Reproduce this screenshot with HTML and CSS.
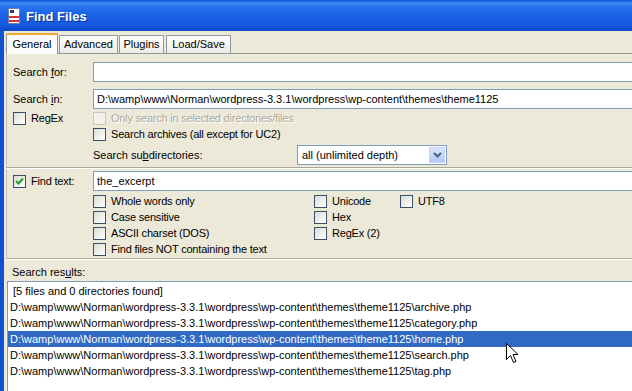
FILE: index.html
```html
<!DOCTYPE html>
<html>
<head>
<title>Find Files</title>
<link rel="stylesheet" href="styles.css">
</head>
<body>
<div class="window">
	<div class="titlebar">
		<svg class="appicon" width="12" height="16" viewBox="0 0 12 16">
			<rect x="0.5" y="0.5" width="11" height="15" fill="#fff" stroke="#6a7fa8"/>
			<rect x="2" y="2" width="4" height="3" fill="#2a3f7a"/>
			<rect x="1" y="8" width="10" height="2" fill="#d8343a"/>
			<rect x="1" y="12" width="10" height="2" fill="#d8343a"/>
		</svg>
		<span class="title">Find Files</span>
	</div>
	<div class="frame">
		<div class="tabs">
			<div class="tab active">General</div>
			<div class="tab adv">Advanced</div>
			<div class="tab plug">Plugins</div>
			<div class="tab load">Load/Save</div>
		</div>
		<div class="panel">
			<div class="row field">
				<span class="label">Search <u>f</u>or:</span>
				<div class="edit"></div>
			</div>
			<div class="row field">
				<span class="label">Search <u>i</u>n:</span>
				<div class="edit">D:\wamp\www\Norman\wordpress-3.3.1\wordpress\wp-content\themes\theme1125</div>
			</div>
			<div class="row check">
				<span class="cb"><i class="box"></i>RegEx</span>
				<span class="cb disabled"><i class="box"></i>Only search in selected directories/files</span>
			</div>
			<div class="row check">
				<span></span>
				<span class="cb"><i class="box"></i>Search archives (all except for UC2)</span>
			</div>
			<div class="row field">
				<span></span>
				<div class="subdirs">
					<span class="sublabel">Search su<u>b</u>directories:</span>
					<div class="select">
						<span>all (unlimited depth)</span>
						<span class="dropbtn">
							<svg width="9" height="6" viewBox="0 0 9 6"><path d="M1 1 L4.5 4.5 L8 1" fill="none" stroke="#4d6185" stroke-width="2"/></svg>
						</span>
					</div>
				</div>
			</div>
		</div>
		<div class="findgroup">
			<div class="row field">
				<span class="cb"><i class="box checked"><svg width="9" height="9" viewBox="0 0 9 9"><path d="M1 4 L3.5 6.5 L8 1.5" fill="none" stroke="#21a121" stroke-width="2"/></svg></i>Find text:</span>
				<div class="edit">the_excerpt</div>
			</div>
			<div class="row">
				<span></span>
				<div class="options">
					<span class="cb"><i class="box"></i>Whole words only</span>
					<span class="cb"><i class="box"></i>Unicode</span>
					<span class="cb"><i class="box"></i>UTF8</span>
					<span class="cb"><i class="box"></i>Case sensitive</span>
					<span class="cb"><i class="box"></i>Hex</span>
					<span></span>
					<span class="cb"><i class="box"></i>ASCII charset (DOS)</span>
					<span class="cb"><i class="box"></i>RegEx (2)</span>
					<span></span>
					<span class="cb"><i class="box"></i>Find files NOT containing the text</span>
				</div>
			</div>
		</div>
		<div class="results-label">Search res<u>u</u>lts:</div>
		<div class="results">
			<div class="item">&nbsp;[5 files and 0 directories found]</div>
			<div class="item">D:\wamp\www\Norman\wordpress-3.3.1\wordpress\wp-content\themes\theme1125\archive.php</div>
			<div class="item">D:\wamp\www\Norman\wordpress-3.3.1\wordpress\wp-content\themes\theme1125\category.php</div>
			<div class="item selected">D:\wamp\www\Norman\wordpress-3.3.1\wordpress\wp-content\themes\theme1125\home.php</div>
			<div class="item">D:\wamp\www\Norman\wordpress-3.3.1\wordpress\wp-content\themes\theme1125\search.php</div>
			<div class="item">D:\wamp\www\Norman\wordpress-3.3.1\wordpress\wp-content\themes\theme1125\tag.php</div>
		</div>
	</div>
	<svg class="cursor" width="13" height="21" viewBox="0 0 13 21">
		<path d="M0.5 0.5 L0.5 16.5 L4.5 12.5 L7.5 19.5 L10 18.5 L7 11.5 L12 11.5 Z" fill="#fff" stroke="#000" stroke-width="1"/>
	</svg>
</div>
</body>
</html>
```

FILE: styles.css
```css
body
{
	margin: 0;
	overflow: hidden;
	background: #ece9d8;
	font-family: "Liberation Sans", Arial, sans-serif;
	font-size: 11px;
	color: #000;
}
.window
{
	position: relative;
	width: 660px;
	height: 391px;
	overflow: hidden;
	background: #ece9d8;
}
.titlebar
{
	height: 31px;
	display: flex;
	align-items: center;
	padding-left: 8px;
	background: linear-gradient(#0a4fd6 0px, #3d8df8 3px, #2b74ee 6px, #1c64e6 14px, #1559de 25px, #0c47c6 31px);
}
.appicon
{
	margin-right: 6px;
	margin-top: 1px;
}
.title
{
	color: #fff;
	font-weight: bold;
	font-size: 13px;
	text-shadow: 1px 1px 0 #0a2f8c;
	margin-top: 1px;
}
.frame
{
	border-left: 4px solid #1252d2;
	height: 360px;
	padding-left: 2px;
}
.tabs
{
	height: 22px;
	display: flex;
	align-items: flex-end;
	border-bottom: 1px solid #919b9c;
}
.tab
{
	height: 17px;
	line-height: 17px;
	text-align: center;
	border: 1px solid #919b9c;
	border-bottom: none;
	background: linear-gradient(#ffffff, #ecebe5);
	margin-right: 1px;
}
.tab.active
{
	width: 50px;
	height: 19px;
	line-height: 19px;
	border-top: 2px solid #f2a93b;
	background: #fcfcfe;
	margin-bottom: -1px;
	position: relative;
}
.tab.adv { width: 57px; }
.tab.plug { width: 43px; }
.tab.load { width: 63px; margin-left: 1px; }

.panel
{
	border-left: 1px solid #c9c6b6;
	padding: 8px 0 2px 6px;
	border-bottom: 1px solid #aca899;
	box-shadow: 0 1px 0 #fff;
}
.row
{
	display: grid;
	grid-template-columns: 80px 1fr;
}
.field
{
	height: 20px;
	align-items: center;
	margin-bottom: 7px;
}
.check
{
	height: 16px;
	align-items: center;
}
.panel .row:nth-child(2)
{
	margin-bottom: 1px;
}
.panel .row:nth-child(4)
{
	margin-bottom: 3px;
}
.panel .row:nth-child(5)
{
	margin-bottom: 0;
}
.edit
{
	height: 18px;
	line-height: 18px;
	border: 1px solid #7f9db9;
	background: #fff;
	padding-left: 3px;
	white-space: nowrap;
}
.cb
{
	display: flex;
	align-items: center;
	white-space: nowrap;
	letter-spacing: -0.2px;
}
.box
{
	display: flex;
	align-items: center;
	justify-content: center;
	width: 11px;
	height: 11px;
	border: 1px solid #3a5068;
	background: linear-gradient(135deg, #dcdcd4, #ffffff);
	margin-right: 5px;
}
.cb.disabled
{
	color: #aca899;
	text-shadow: 1px 1px 0 #fff;
}
.cb.disabled .box
{
	border-color: #cac8bb;
	background: #f2f1ea;
}
.subdirs
{
	display: flex;
	align-items: center;
}
.sublabel
{
	width: 204px;
}
.select
{
	width: 144px;
	height: 18px;
	border: 1px solid #7f9db9;
	background: #fff;
	display: flex;
	align-items: center;
	justify-content: space-between;
	padding-left: 4px;
	box-sizing: content-box;
}
.dropbtn
{
	width: 16px;
	height: 16px;
	margin-right: 1px;
	display: flex;
	align-items: center;
	justify-content: center;
	background: linear-gradient(#dbe5fb, #b4c8f6);
	border: 1px solid #c3d3fd;
	box-sizing: border-box;
}

.findgroup
{
	border-left: 1px solid #c9c6b6;
	padding: 2px 0 1px 6px;
	border-bottom: 1px solid #aca899;
	box-shadow: 0 1px 0 #fff;
	margin-top: 1px;
}
.findgroup .field
{
	margin-bottom: 2px;
}
.options
{
	display: grid;
	grid-template-columns: 221px 86px 1fr;
	grid-auto-rows: 16px;
	align-items: center;
}
.results-label
{
	height: 14px;
	line-height: 14px;
	padding: 6px 0 0 6px;
	margin-bottom: 2px;
}
.results
{
	margin-left: 1px;
	height: 120px;
	border: 1px solid #7f9db9;
	background: #fff;
	padding-top: 1px;
}
.item
{
	height: 16px;
	line-height: 16px;
	padding-left: 2px;
	white-space: nowrap;
}
.item.selected
{
	background: #316ac5;
	color: #fff;
}
.cursor
{
	position: absolute;
	left: 506px;
	top: 343px;
}
```
